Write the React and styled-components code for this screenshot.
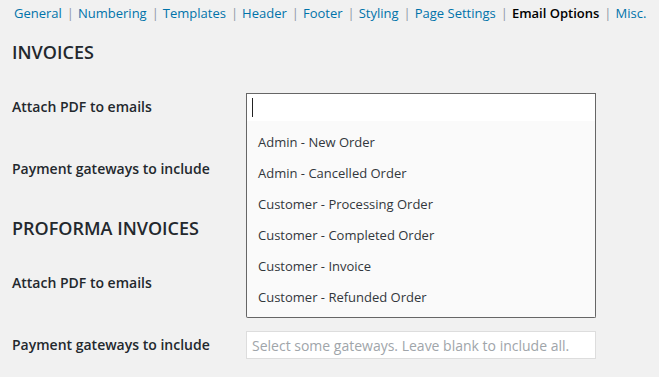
import React from "react";
import styled, { createGlobalStyle } from "styled-components";

const GlobalStyle = createGlobalStyle`
  html, body {
    margin: 0;
    padding: 0;
    background: #f1f1f1;
  }
  body {
    font-family: "Open Sans", "Liberation Sans", sans-serif;
    color: #23282d;
  }
`;

const Page = styled.div`
  padding: 0 12px;
  width: 659px;
  height: 377px;
  box-sizing: border-box;
  overflow: hidden;
`;

const Tabs = styled.nav`
  display: flex;
  align-items: center;
  margin-top: 4px;
  height: 18px;
  font-size: 13px;
  line-height: 18px;
  padding-left: 2px;
  white-space: nowrap;
`;

const Tab = styled.a`
  flex-shrink: 0;
  color: ${(p) => (p.$active ? "#000" : "#0073aa")};
  font-weight: ${(p) => (p.$active ? 600 : 400)};
  text-decoration: none;
`;

const Sep = styled.span`
  flex-shrink: 0;
  color: #8f98a6;
  margin: 0 4px 0 5px;
`;

const Heading = styled.h2`
  font-size: 18px;
  font-weight: 600;
  line-height: 24px;
  margin: ${(p) => (p.$first ? "18px" : "16px")} 0 12px;
  color: #23282d;
  text-transform: uppercase;
`;

const Row = styled.div`
  display: grid;
  grid-template-columns: 234px 350px;
  align-items: center;
  height: 62px;
`;

const Label = styled.label`
  font-size: 14px;
  font-weight: 600;
  line-height: 20px;
  color: #23282d;
`;

const Select = styled.div`
  position: relative;
  height: 28px;
`;

const Selection = styled.div`
  height: 28px;
  box-sizing: border-box;
  border: 1px solid #666;
  border-bottom: none;
  background: #fff;
  display: flex;
  align-items: center;
  padding-left: 5px;
`;

const Caret = styled.span`
  width: 1px;
  height: 19px;
  background: #222;
`;

const Dropdown = styled.ul`
  position: absolute;
  top: 28px;
  left: 0;
  right: 0;
  z-index: 10;
  margin: 0;
  padding: 6px 0 4px;
  list-style: none;
  background: #fafafa;
  border: 1px solid #666;
  border-top: none;
  border-radius: 0 0 2px 2px;
`;

const Option = styled.li`
  height: 31px;
  line-height: 31px;
  padding-left: 11px;
  font-size: 13px;
  color: #32373c;
`;

const Input = styled.input`
  height: 28px;
  box-sizing: border-box;
  border: 1px solid #ddd;
  background: #fff;
  padding: 0 5px;
  font-family: "Open Sans", "Liberation Sans", sans-serif;
  font-size: 14px;
  color: #32373c;
  outline: none;
  &::placeholder {
    color: #a0a5aa;
  }
`;

const tabs = [
  "General",
  "Numbering",
  "Templates",
  "Header",
  "Footer",
  "Styling",
  "Page Settings",
  "Email Options",
  "Misc.",
];

const emails = [
  "Admin - New Order",
  "Admin - Cancelled Order",
  "Customer - Processing Order",
  "Customer - Completed Order",
  "Customer - Invoice",
  "Customer - Refunded Order",
];

const GatewayInput = () => (
  <Input placeholder="Select some gateways. Leave blank to include all." />
);

export default function App() {
  return (
    <Page>
      <GlobalStyle />
      <Tabs>
        {tabs.map((t, i) => (
          <React.Fragment key={t}>
            {i > 0 && <Sep>|</Sep>}
            <Tab href="#" $active={t === "Email Options"}>
              {t}
            </Tab>
          </React.Fragment>
        ))}
      </Tabs>

      <Heading $first>Invoices</Heading>
      <Row>
        <Label>Attach PDF to emails</Label>
        <Select>
          <Selection>
            <Caret />
          </Selection>
          <Dropdown>
            {emails.map((e) => (
              <Option key={e}>{e}</Option>
            ))}
          </Dropdown>
        </Select>
      </Row>
      <Row>
        <Label>Payment gateways to include</Label>
        <GatewayInput />
      </Row>

      <Heading>Proforma Invoices</Heading>
      <Row>
        <Label>Attach PDF to emails</Label>
        <Input />
      </Row>
      <Row>
        <Label>Payment gateways to include</Label>
        <GatewayInput />
      </Row>
    </Page>
  );
}
